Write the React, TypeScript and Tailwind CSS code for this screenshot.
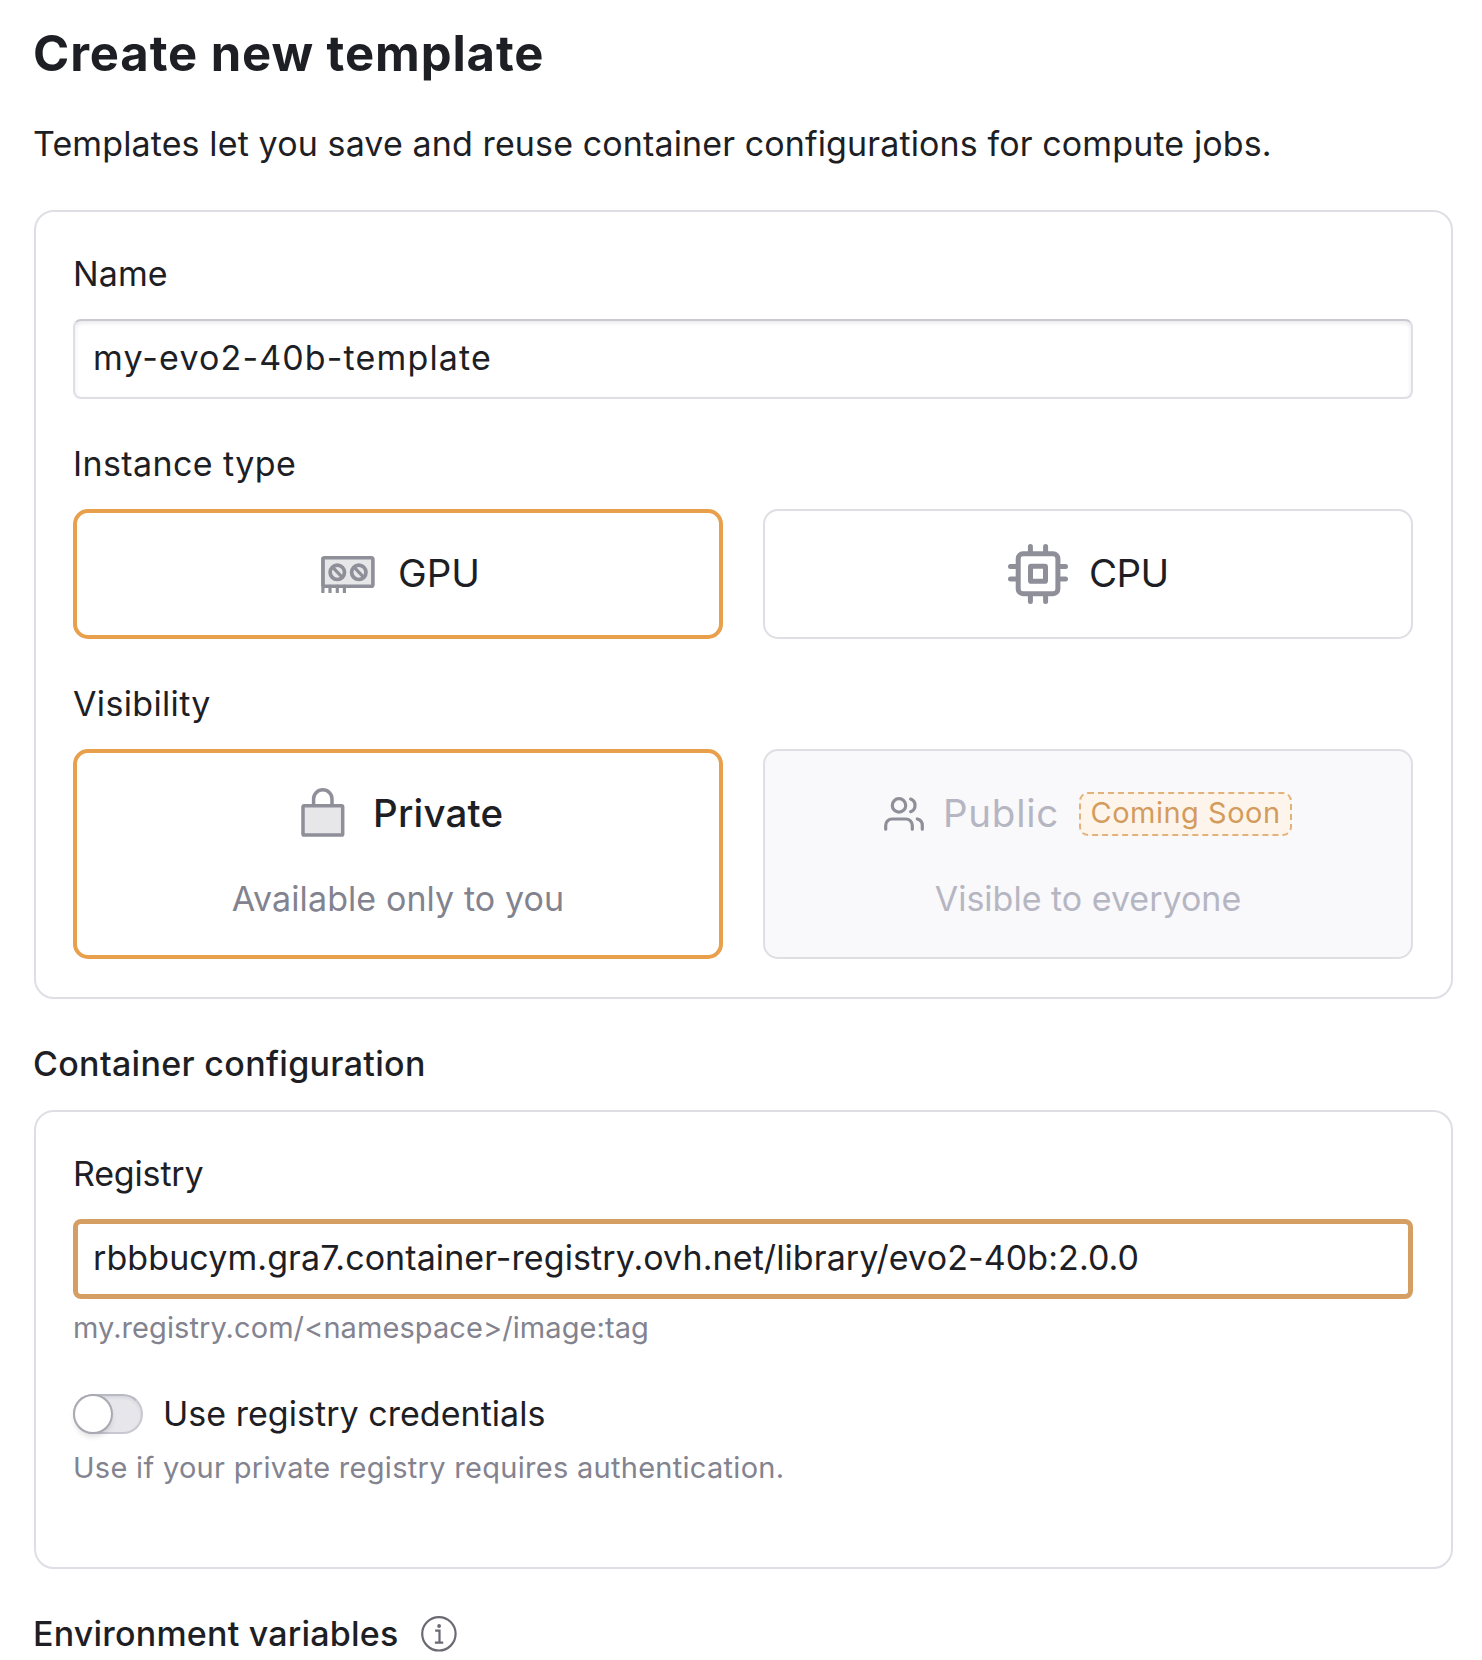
import React from "react";

function GpuIcon() {
  return (
    <svg width="56" height="38" viewBox="0 0 56 38" fill="none" stroke="#8f8f99" className="shrink-0">
      <rect x="3" y="2.8" width="49.9" height="28.4" rx="1.8" fill="#e7e7ea" strokeWidth="3.6" />
      <g strokeWidth="3.2" strokeLinecap="round">
        <path d="M2.9 3v34.2M10 31v6.2M17.3 31v6.2M24.4 31v6.2" />
        <path d="M13 12.6l8.6 9M34.5 12.6l8.6 9" />
      </g>
      <circle cx="17.3" cy="17.3" r="7.2" strokeWidth="3.7" />
      <circle cx="38.8" cy="17.3" r="7.2" strokeWidth="3.7" />
    </svg>
  );
}

function CpuIcon() {
  return (
    <svg width="60" height="60" viewBox="0 0 60 60" fill="none" stroke="#8f8f99" strokeWidth="5" className="shrink-0">
      <rect x="10.2" y="9.8" width="39.7" height="39.9" rx="4.8" />
      <rect x="22.5" y="22.3" width="15" height="15" rx="0.6" />
      <path
        strokeLinecap="round"
        d="M22.4 8V2.5M37.6 8V2.5M22.4 52v5.5M37.6 52v5.5M8 22.4H2.5M8 35H2.5M52 22.4h5.5M52 35h5.5"
      />
    </svg>
  );
}

function LockIcon() {
  return (
    <svg width="44" height="50" viewBox="0 0 44 50" fill="none" stroke="#8f8f99" strokeWidth="3.5" className="-mt-px shrink-0">
      <path d="M12.6 18v-7a9.2 9.2 0 0 1 18.4 0v7" />
      <rect x="2" y="17.8" width="39.7" height="29.3" rx="1.2" fill="#e7e7ea" />
    </svg>
  );
}

function UsersIcon() {
  return (
    <svg
      width="40"
      height="34"
      viewBox="0 0 40 34"
      fill="none"
      stroke="#8f8f99"
      strokeWidth="3.2"
      strokeLinecap="round"
      className="mt-px shrink-0"
    >
      <circle cx="15" cy="8.4" r="6.7" />
      <path d="M1.7 32.2V28.4a6.4 6.4 0 0 1 6.4-6.4h13.8a6.4 6.4 0 0 1 6.4 6.4v3.8" />
      <path d="M26.6 2.1a6.7 6.7 0 0 1 0 12.6" />
      <path d="M33.3 22c3 .8 5 3.2 5 6.4v3.8" />
    </svg>
  );
}

function InfoIcon() {
  return (
    <svg width="36" height="36" viewBox="0 0 36 36" fill="none" stroke="#6a6a73" strokeWidth="2.2" className="shrink-0">
      <circle cx="17.9" cy="17.8" r="16.7" />
      <path d="M14.2 14.6h4.3v12M13.9 26.6h8.3" />
      <circle cx="18.1" cy="10" r="1.9" fill="#6a6a73" stroke="none" />
    </svg>
  );
}

function Label({ children, className = "" }: { children: React.ReactNode; className?: string }) {
  return <label className={`block text-[34px] leading-[40px] ${className}`}>{children}</label>;
}

export default function App() {
  return (
    <main className="h-[1660px] w-[1482px] overflow-hidden bg-white pt-6 pl-[33px] font-['Inter',sans-serif] text-[#1e1e25]">
      <h1 className="text-[49px] leading-[60px] font-bold tracking-[0.9px]">Create new template</h1>
      <p className="mt-10 text-[34px] leading-[40px] tracking-[0.12px]">
        Templates let you save and reuse container configurations for compute jobs.
      </p>

      <section className="mt-[46px] ml-px w-[1419px] rounded-[20px] border-2 border-[#dedee4] pt-[42px] pr-[38px] pb-[38px] pl-[37px]">
        <Label className="tracking-[0.1px]">Name</Label>
        <input
          className="mt-[25px] block h-20 w-full rounded-lg border-2 border-[#dedee4] border-t-[#c9c9cf] pb-[3px] pl-[18px] text-[34px] tracking-[1.14px] shadow-[inset_0_2px_4px_rgba(30,30,40,0.10)] outline-none"
          defaultValue="my-evo2-40b-template"
        />

        <Label className="mt-[45px] tracking-[0.4px]">Instance type</Label>
        <div className="mt-[25px] grid grid-cols-2 gap-10">
          <div className="flex h-[130px] items-center rounded-[15px] border-4 border-[#e8a04d] pl-[243px]">
            <GpuIcon />
            <span className="-mt-[3px] ml-[22px] text-[38.5px] leading-[48px]">GPU</span>
          </div>
          <div className="flex h-[130px] items-center rounded-[15px] border-2 border-[#dedee4] pl-[243px]">
            <CpuIcon />
            <span className="-mt-[3px] ml-[21px] text-[38.5px] leading-[48px] tracking-[-0.6px]">CPU</span>
          </div>
        </div>

        <Label className="mt-[45px] tracking-[0.35px]">Visibility</Label>
        <div className="mt-[25px] grid grid-cols-2 gap-10">
          <div className="h-[210px] rounded-[15px] border-4 border-[#e8a04d] pt-9">
            <div className="flex h-12 items-center pl-[224px]">
              <LockIcon />
              <span className="-mt-px ml-7 text-[38.5px] leading-[48px] font-medium tracking-[0.22px]">Private</span>
            </div>
            <p className="mt-[42px] text-center text-[34px] leading-[40px] tracking-[0.09px] text-[#83838f]">
              Available only to you
            </p>
          </div>
          <div className="h-[210px] rounded-[15px] border-2 border-[#dedee4] bg-[#f9f9fb] pt-[38px]">
            <div className="flex h-12 items-center pl-[119px]">
              <UsersIcon />
              <span className="-mt-px ml-[19px] text-[38.5px] leading-[48px] tracking-[0.74px] text-[#b6b6c3]">Public</span>
              <span className="mt-[2px] ml-5 h-11 w-[213px] rounded-[9px] border-2 border-dashed border-[#e3b27b] bg-[#fdf5ec] text-center text-[29px] leading-[37px] tracking-[0.5px] text-[#d49c5c]">
                Coming Soon
              </span>
            </div>
            <p className="mt-[42px] text-center text-[34px] leading-[40px] text-[#b6b6c3]">Visible to everyone</p>
          </div>
        </div>
      </section>

      <h2 className="mt-[45px] text-[34px] leading-[40px] font-medium tracking-[0.32px]">Container configuration</h2>

      <section className="mt-[26px] ml-px w-[1419px] rounded-[20px] border-2 border-[#dedee4] pt-[42px] pr-[38px] pb-[81px] pl-[37px]">
        <Label className="tracking-[-0.17px]">Registry</Label>
        <input
          className="mt-[25px] block h-20 w-full rounded-lg border-[5px] border-[#d59f63] pb-[3px] pl-[15px] text-[34px] tracking-[0.09px] outline-none"
          defaultValue="rbbbucym.gra7.container-registry.ovh.net/library/evo2-40b:2.0.0"
        />
        <p className="mt-[11px] text-[29px] leading-[36px] tracking-[0.08px] text-[#83838f]">
          my.registry.com/&lt;namespace&gt;/image:tag
        </p>

        <div className="mt-[48px] flex h-10">
          <button
            type="button"
            aria-label="Use registry credentials"
            className="h-10 w-[70px] rounded-full border-2 border-[#c8c8d0] border-t-[#b9b9c4] bg-[#e6e6eb] shadow-[inset_0_2px_3px_rgba(30,30,50,0.08)]"
          >
            <span className="block size-9 rounded-full bg-white shadow-[0_0_0_2px_#a9a9b2,0_4px_6px_rgba(0,0,0,0.16)]" />
          </button>
          <span className="ml-5 text-[34px] leading-[40px] tracking-[0.03px]">Use registry credentials</span>
        </div>
        <p className="mt-4 text-[29px] leading-[36px] tracking-[0.29px] text-[#83838f]">
          Use if your private registry requires authentication.
        </p>
      </section>

      <div className="mt-[45px] flex items-center">
        <h2 className="text-[34px] leading-[40px] font-medium tracking-[0.2px]">Environment variables</h2>
        <span className="ml-[23px]">
          <InfoIcon />
        </span>
      </div>
    </main>
  );
}
